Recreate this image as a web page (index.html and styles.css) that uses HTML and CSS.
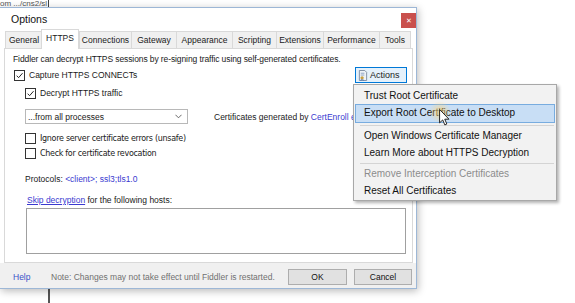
FILE: index.html
```html
<html>
<head>
<title>Options</title>
<meta name="viewport" content="width=device-width, initial-scale=1">
<link rel="stylesheet" href="styles.css">
</head>
<body>
<div class="desktop">
  <div class="behind">om .../cns2/sl<span class="caret"></span></div>
  <div class="vline"></div>

  <div class="dialog">
    <div class="titlebar">
      <span class="title">Options</span>
      <span class="close">&#x2715;</span>
    </div>

    <div class="tabs">
      <div class="tab w-general">General</div>
      <div class="tab active w-https">HTTPS</div>
      <div class="tab w-conn">Connections</div>
      <div class="tab w-gate">Gateway</div>
      <div class="tab w-appear">Appearance</div>
      <div class="tab w-script">Scripting</div>
      <div class="tab w-ext">Extensions</div>
      <div class="tab w-perf">Performance</div>
      <div class="tab w-tools">Tools</div>
    </div>

    <div class="panel">
      <div class="intro">Fiddler can decrypt HTTPS sessions by re-signing traffic using self-generated certificates.</div>

      <div class="row capture">
        <label class="check"><span class="box on"><svg viewBox="0 0 10 10"><path d="M1.8 5.2 L4 7.4 L8.4 2.4" fill="none" stroke="#222" stroke-width="1.1"/></svg></span>Capture HTTPS CONNECTs</label>
        <div class="actions">
          <svg class="cert" viewBox="0 0 11 12"><path d="M1.5 .5h6l2 2v9h-8z" fill="#eef3f8" stroke="#7a8aa0"/><path d="M3 3.5h4M3 5.5h4" stroke="#8aa0c0"/><circle cx="4.5" cy="8.5" r="1.8" fill="#c8a040"/><path d="M3.8 10l-.6 1.8M5.2 10l.6 1.8" stroke="#4a6fb0"/></svg>Actions
        </div>
      </div>

      <div class="row sub decrypt">
        <label class="check"><span class="box on"><svg viewBox="0 0 10 10"><path d="M1.8 5.2 L4 7.4 L8.4 2.4" fill="none" stroke="#222" stroke-width="1.1"/></svg></span>Decrypt HTTPS traffic</label>
      </div>

      <div class="row sub procs">
        <div class="select">...from all processes<svg viewBox="0 0 8 5"><path d="M.5 .5 L4 4 L7.5 .5" fill="none" stroke="#555"/></svg></div>
        <div class="generated">Certificates generated by <a>CertEnroll e</a></div>
      </div>

      <div class="row sub ignore">
        <label class="check mono"><span class="box"></span>Ignore server certificate errors (unsafe)</label>
      </div>

      <div class="row sub revoke">
        <label class="check mono"><span class="box"></span>Check for certificate revocation</label>
      </div>

      <div class="line sub protocols">Protocols: <a>&lt;client&gt;; ssl3;tls1.0</a></div>

      <div class="line sub skip"><a class="ul">Skip decryption</a> for the following hosts:</div>

      <div class="hosts"></div>
    </div>

    <div class="footer">
      <a class="help">Help</a>
      <span class="note">Note: Changes may not take effect until Fiddler is restarted.</span>
      <button class="btn ok">OK</button>
      <button class="btn cancel">Cancel</button>
    </div>
  </div>

  <div class="menu">
    <div class="item">Trust Root Certificate</div>
    <div class="item hot">Export Root Certificate to Desktop</div>
    <div class="sep"></div>
    <div class="item">Open Windows Certificate Manager</div>
    <div class="item">Learn More about HTTPS Decryption</div>
    <div class="sep"></div>
    <div class="item off">Remove Interception Certificates</div>
    <div class="item">Reset All Certificates</div>
  </div>

  <div class="glow"></div>
  <svg class="pointer" viewBox="0 0 12 19"><path d="M.5 .5 V15.5 L4 12.2 L6.4 17.8 L8.6 16.8 L6.3 11.4 H11 Z" fill="#fff" stroke="#111" stroke-width="1"/></svg>
</div>
</body>
</html>
```

FILE: styles.css
```css
body {
  margin: 0;
  background: #fff;
  font-family: "Liberation Sans", Arial, sans-serif;
  font-size: 8.5px;
  color: #1a1a1a;
}

a {
  color: #3a3ad0;
}

.desktop {
  position: relative;
  width: 575px;
  height: 303px;
  overflow: hidden;
}

.behind {
  display: flex;
  align-items: flex-start;
  height: 8px;
  font-size: 8px;
  line-height: 7px;
  color: #555;
}
.caret {
  width: 1px;
  height: 8px;
  margin-left: 1px;
  background: #444;
}

.vline {
  position: absolute;
  left: 48px;
  top: 286px;
  width: 2px;
  height: 17px;
  background: #555;
}

/* dialog window */
.dialog {
  position: absolute;
  left: 0;
  top: 7px;
  width: 416px;
  height: 280px;
  border: 1px solid #9db7d6;
  border-left: 0;
  background: #fff;
  box-shadow: 1px 2px 8px rgba(0, 0, 0, .28);
  display: flex;
  flex-direction: column;
}

.titlebar {
  height: 21px;
  display: flex;
  justify-content: space-between;
  align-items: flex-start;
  padding-left: 11px;
}
.title {
  margin-top: 5px;
  font-size: 10.5px;
  color: #111;
}
.close {
  width: 15px;
  height: 15px;
  margin-top: 5px;
  background: #c9504d;
  color: #fff;
  font-size: 7px;
  line-height: 15px;
  text-align: center;
}

.tabs {
  display: flex;
  align-items: flex-end;
  height: 19px;
  padding-left: 5px;
}
.tab {
  height: 16px;
  line-height: 16px;
  text-align: center;
  background: #f0f0f0;
  border: 1px solid #d9d9d9;
  border-bottom: 0;
  margin-right: -1px;
}
.tab.active {
  height: 19px;
  line-height: 17px;
  background: #fff;
  margin: 0 0 -1px -1px;
  position: relative;
  z-index: 1;
}
.w-general { width: 36px; }
.w-https { width: 36px; }
.w-conn { width: 51px; }
.w-gate { width: 44px; }
.w-appear { width: 55px; }
.w-script { width: 43px; }
.w-ext { width: 46px; }
.w-perf { width: 55px; }
.w-tools { width: 30px; }

.panel {
  height: 209px;
  margin: 0 3px 0 4px;
  border: 1px solid #d9d9d9;
  padding: 4px 6px 0 8px;
  display: flex;
  flex-direction: column;
}

.intro {
  height: 12px;
  line-height: 12px;
  letter-spacing: -.1px;
}

.row {
  display: flex;
  align-items: center;
}
.line {
  height: 12px;
  line-height: 12px;
}
.sub {
  padding-left: 12px;
}

.check {
  display: flex;
  align-items: center;
  gap: 4px;
}
.check.mono {
  font-family: "DejaVu Sans", sans-serif;
  font-size: 8px;
  letter-spacing: -.3px;
}
.box {
  width: 9px;
  height: 9px;
  border: 1px solid #333;
  background: #fff;
  display: flex;
}
.box svg {
  width: 9px;
  height: 9px;
}

.capture {
  height: 16px;
  margin-top: 2px;
  justify-content: space-between;
  padding-left: 1px;
}
.actions {
  display: flex;
  align-items: center;
  gap: 2px;
  width: 48px;
  height: 14px;
  padding-left: 2px;
  border: 1px solid #0078d7;
  background: #e5f1fb;
  font-size: 9px;
  margin-right: -1px;
}
.cert {
  width: 10px;
  height: 11px;
}

.decrypt {
  height: 12px;
  margin-top: 4px;
}

.procs {
  height: 15px;
  margin-top: 10px;
}
.select {
  width: 154px;
  height: 13px;
  border: 1px solid #b8b8b8;
  background: #fff;
  display: flex;
  align-items: center;
  justify-content: space-between;
  padding: 0 5px 0 2px;
}
.select svg {
  width: 7px;
  height: 5px;
}
.generated {
  margin-left: 26px;
}

.ignore {
  height: 12px;
  margin-top: 8px;
}
.revoke {
  height: 12px;
  margin-top: 3px;
}
.protocols {
  margin-top: 14px;
}
.skip {
  margin-top: 9px;
  padding-left: 14px;
}
.ul {
  text-decoration: underline;
}
.hosts {
  height: 44px;
  margin: 2px 0 0 13px;
  border: 1px solid #a0a0a0;
  background: #fff;
}

.footer {
  flex: 1;
  background: #f0f0f0;
  display: flex;
  align-items: center;
  padding: 2px 0 0 13px;
}
.help {
  color: #3a50c8;
  width: 38px;
}
.note {
  color: #707070;
  width: 237px;
}
.btn {
  height: 16px;
  padding: 0;
  border: 1px solid #adadad;
  background: #e1e1e1;
  font-family: inherit;
  font-size: 8.5px;
  color: #111;
}
.ok { width: 59px; }
.cancel { width: 58px; margin-left: 7px; }

/* context menu */
.menu {
  position: absolute;
  left: 353px;
  top: 84px;
  width: 202px;
  padding: 2px 0 1px;
  border: 1px solid #a8a8a8;
  background: #f2f2f2;
  box-shadow: 2px 2px 3px rgba(0, 0, 0, .3);
  font-size: 10px;
  color: #111;
}
.item {
  height: 17px;
  line-height: 17px;
  padding-left: 8px;
  margin: 0 1px;
  border: 1px solid transparent;
  border-width: 0 1px;
}
.item.hot {
  background: #c8def5;
  border: 1px solid #78acdf;
  line-height: 15px;
}
.item.off {
  color: #8c8c8c;
}
.sep {
  height: 1px;
  margin: 2px 2px 1px 6px;
  background: #d4d4d4;
}

.glow {
  position: absolute;
  left: 429px;
  top: 101px;
  width: 22px;
  height: 22px;
  border-radius: 50%;
  background: radial-gradient(circle, rgba(255, 214, 120, .75), rgba(255, 224, 150, 0) 70%);
}
.pointer {
  position: absolute;
  left: 439px;
  top: 109px;
  width: 11px;
  height: 17px;
}
```
